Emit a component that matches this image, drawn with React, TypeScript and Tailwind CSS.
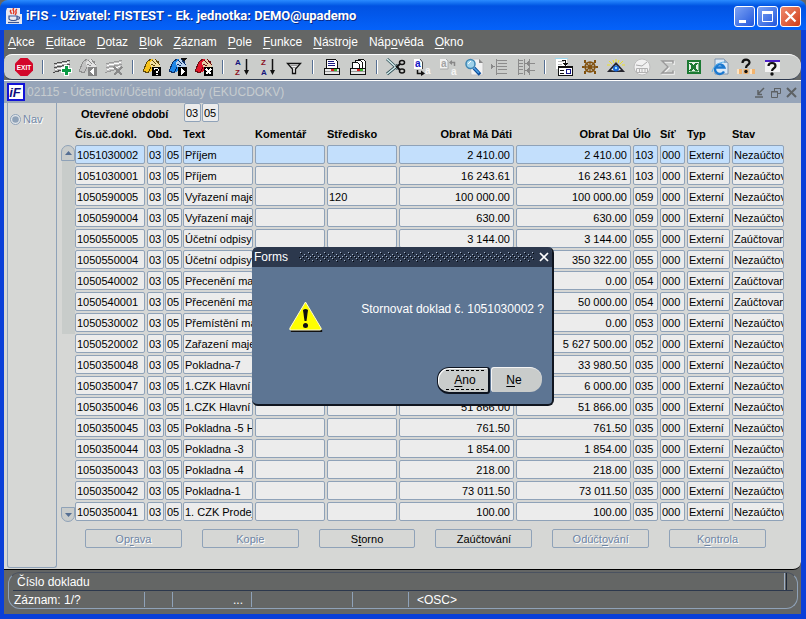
import React, { useState } from 'react';
import clsx from 'clsx';

interface DocumentRow {
  id: string;
  text: string;
  center?: string;
  debit: string;
  credit: string;
  task: string;
  status: string;
}

const OPEN = 'Nezaúčtovaný';
const POSTED = 'Zaúčtovaný';

const ROWS: DocumentRow[] = [
  { id: '1051030002', text: 'Příjem', debit: '2 410.00', credit: '2 410.00', task: '103', status: OPEN },
  { id: '1051030001', text: 'Příjem', debit: '16 243.61', credit: '16 243.61', task: '103', status: OPEN },
  { id: '1050590005', text: 'Vyřazení majetku', center: '120', debit: '100 000.00', credit: '100 000.00', task: '059', status: OPEN },
  { id: '1050590004', text: 'Vyřazení majetku', debit: '630.00', credit: '630.00', task: '059', status: OPEN },
  { id: '1050550005', text: 'Účetní odpisy', debit: '3 144.00', credit: '3 144.00', task: '055', status: POSTED },
  { id: '1050550004', text: 'Účetní odpisy', debit: '350 322.00', credit: '350 322.00', task: '055', status: OPEN },
  { id: '1050540002', text: 'Přecenění majetku', debit: '0.00', credit: '0.00', task: '054', status: POSTED },
  { id: '1050540001', text: 'Přecenění majetku', debit: '50 000.00', credit: '50 000.00', task: '054', status: POSTED },
  { id: '1050530002', text: 'Přemístění majetku', debit: '0.00', credit: '0.00', task: '053', status: OPEN },
  { id: '1050520002', text: 'Zařazení majetku', debit: '5 627 500.00', credit: '5 627 500.00', task: '052', status: OPEN },
  { id: '1050350048', text: 'Pokladna-7', debit: '33 980.50', credit: '33 980.50', task: '035', status: OPEN },
  { id: '1050350047', text: '1.CZK Hlavní', debit: '6 000.00', credit: '6 000.00', task: '035', status: OPEN },
  { id: '1050350046', text: '1.CZK Hlavní', debit: '51 866.00', credit: '51 866.00', task: '035', status: OPEN },
  { id: '1050350045', text: 'Pokladna -5 H', debit: '761.50', credit: '761.50', task: '035', status: OPEN },
  { id: '1050350044', text: 'Pokladna -3', debit: '1 854.00', credit: '1 854.00', task: '035', status: OPEN },
  { id: '1050350043', text: 'Pokladna -4', debit: '218.00', credit: '218.00', task: '035', status: OPEN },
  { id: '1050350042', text: 'Pokladna-1', debit: '73 011.50', credit: '73 011.50', task: '035', status: OPEN },
  { id: '1050350041', text: '1. CZK Prodej', debit: '100.00', credit: '100.00', task: '035', status: OPEN },
];

// "_" marks the mnemonic letter that follows it
const MENU = ['_Akce', '_Editace', '_Dotaz', '_Blok', '_Záznam', '_Pole', '_Funkce', '_Nástroje', 'Náp_ověda', '_Okno'];

const ACTIONS = [
  { label: 'Op_rava', disabled: true },
  { label: 'Kopie', disabled: true },
  { label: 'S_torno', disabled: false },
  { label: 'Zaúčtování', disabled: false },
  { label: 'Odúčt_ování', disabled: true },
  { label: 'K_ontrola', disabled: true },
];

const Mnemonic = ({ label }: { label: string }) => {
  const at = label.indexOf('_');
  if (at < 0) return <>{label}</>;
  return (
    <>
      {label.slice(0, at)}
      <span className="underline underline-offset-2">{label[at + 1]}</span>
      {label.slice(at + 2)}
    </>
  );
};

const Icon = ({ children, smooth }: { children: React.ReactNode; smooth?: boolean }) => (
  <svg viewBox="0 0 20 20" className="h-5 w-5" shapeRendering={smooth ? 'auto' : 'crispEdges'} fill="none" aria-hidden="true">
    {children}
  </svg>
);

const Strip = ({ ink, light }: { ink: string; light: string }) => (
  <>
    <path d="M2 6L18 3V11L2 15Z" fill={light} />
    <path d="M2 6.500L18 3.500M2 10.500L18 7.500M1 15.500L14 12" stroke={ink} />
    <path d="M3 8.500L17 5.500M3 12.500L16 9.500" stroke="#fff" />
  </>
);

const Folder = ({ color, dark, paper, children }: { color: string; dark: string; paper: string; children: React.ReactNode }) => (
  <>
    <path d="M1 14L5 5L10 2L14 6L10 14L6 16Z" fill={color} />
    <path d="M1 14L5 5L9 2M1 14L6 16L9 10" stroke={dark} />
    <path d="M8 5L13 2L18 7V10H9Z" fill={paper} />
    <path d="M10 3L14 7M13 2L18 8M9 7L13 9M14 4L17 5" stroke={dark} />
    {children}
  </>
);

const Printer = ({ stack }: { stack?: boolean }) => (
  <>
    {stack && <path d="M10.500 4V2.500H15.500L17.500 4.500V11H10.500Z" fill="#fff" stroke="#111" />}
    {stack && <path d="M7.500 5V3.500H12.500L14.500 5.500V11H7.500Z" fill="#fff" stroke="#111" />}
    {stack && <path d="M4.500 11V5.500H9.500L11.500 7.500V11Z" fill="#fff" stroke="#111" />}
    {!stack && <path d="M4.500 11.500V2.500H13.500L15.500 4.500V11.500Z" fill="#fff" stroke="#111" />}
    {!stack && <path d="M6 4.500H12M6 6.500H13M6 8.500H13" stroke="#1a1a80" />}
    <path d="M2.500 11.500H17.500V17.500H2.500Z" fill="#e8e8e8" stroke="#111" />
    <path d="M3 14.500H17" stroke="#999" />
    <path d="M9 12H12V14H9Z" fill="#d81e1e" />
    <path d="M12 12H15V14H12Z" fill="#3cb52c" />
  </>
);

const iconFont = "font-['Liberation_Sans',Arial,sans-serif] font-bold";

const TOOLBAR: ({ name: string; icon: React.ReactNode; disabled?: boolean } | null)[] = [
  {
    name: 'Konec',
    icon: (
      <Icon smooth>
        <path d="M6.500 1H13.500L19 6.500V13.500L13.500 19H6.500L1 13.500V6.500Z" fill="#d3072a" />
        <text x="10" y="12.500" textAnchor="middle" fontSize="6.500" fill="#fff" className={iconFont}>EXIT</text>
      </Icon>
    ),
  },
  null,
  {
    name: 'Vložit záznam',
    icon: <Icon><Strip ink="#4c4c4c" light="#b4b4b4" /><path d="M12 8H17V11H20V16H17V19H12V16H9V11H12Z" fill="#fff" /><path d="M13 9H16V12H19V15H16V18H13V15H10V12H13Z" fill="#0b9a44" /></Icon>,
  },
  {
    name: 'Kopírovat záznam',
    disabled: true,
    icon: <Icon><Folder color="#c2c2c2" dark="#8d8d8d" paper="#e2e2e2"><path d="M10 10H19V19H10Z" fill="#858585" /><path d="M16 11V18L12 14.500Z" fill="#fff" /></Folder></Icon>,
  },
  {
    name: 'Smazat záznam',
    disabled: true,
    icon: <Icon><Strip ink="#9a9a9a" light="#c4c4c4" /><path d="M10 10L18 18M18 10L10 18" stroke="#8a8a8a" strokeWidth="2" /></Icon>,
  },
  null,
  {
    name: 'Zadat dotaz',
    icon: (
      <Icon>
        <Folder color="#f6c21c" dark="#5e4708" paper="#f3e0a0">
          <path d="M10 10H19V19H10Z" fill="#000" />
          <path d="M12 11H16V12H12ZM16 12H17V14H16ZM12 12H13V13H12ZM14 14H16V16H14ZM14 17H16V18H14Z" fill="#fff" />
        </Folder>
      </Icon>
    ),
  },
  {
    name: 'Provést dotaz',
    icon: <Icon><Folder color="#1d86e8" dark="#0c2f66" paper="#b9d2ee"><path d="M12 1H19L16 5Z" fill="#111" /><path d="M10 10H19V19H10Z" fill="#000" /><path d="M13 11V18L17 14.500Z" fill="#fff" /></Folder></Icon>,
  },
  {
    name: 'Zrušit dotaz',
    icon: <Icon><Folder color="#e0152a" dark="#6b0b10" paper="#e8cfa8"><path d="M10 10H19V19H10Z" fill="#000" /><path d="M12 12L17 17M17 12L12 17" stroke="#fff" strokeWidth="1.500" /></Folder></Icon>,
  },
  null,
  {
    name: 'Seřadit vzestupně',
    icon: (
      <Icon smooth>
        <text x="3" y="8" fontSize="8" fill="#15157c" className={iconFont}>A</text>
        <text x="3" y="18" fontSize="8" fill="#8a1024" className={iconFont}>Z</text>
        <path d="M14.500 2V16" stroke="#111" strokeWidth="1.500" />
        <path d="M12 13H17L14.500 18Z" fill="#111" />
      </Icon>
    ),
  },
  {
    name: 'Seřadit sestupně',
    icon: (
      <Icon smooth>
        <text x="3" y="8" fontSize="8" fill="#8a1024" className={iconFont}>Z</text>
        <text x="3" y="18" fontSize="8" fill="#15157c" className={iconFont}>A</text>
        <path d="M14.500 2V16" stroke="#111" strokeWidth="1.500" />
        <path d="M12 13H17L14.500 18Z" fill="#111" />
      </Icon>
    ),
  },
  {
    name: 'Filtr',
    icon: <Icon smooth><path d="M3.500 6.500H16.500L11.500 12V16.500H8.500V12Z" fill="#f0f0f0" stroke="#111" strokeWidth="1.300" /><path d="M6 8.500H14M8 10.500H12" stroke="#999" /></Icon>,
  },
  null,
  { name: 'Tisk', icon: <Icon><Printer /></Icon> },
  { name: 'Tisk více', icon: <Icon><Printer stack /></Icon> },
  null,
  {
    name: 'Vyjmout',
    icon: (
      <Icon smooth>
        <path d="M1 2L12 12M1 17L12 8" stroke="#2b4a50" strokeWidth="3" />
        <path d="M1 2L12 12M1 17L12 8" stroke="#d5eef0" strokeWidth="1.500" />
        <path d="M10 10.500L14 7M10 9L14 13" stroke="#111" strokeWidth="2" />
        <ellipse cx="16" cy="5.500" rx="2.500" ry="2" stroke="#111" strokeWidth="1.500" />
        <ellipse cx="16" cy="14" rx="2.500" ry="2" stroke="#111" strokeWidth="1.500" />
      </Icon>
    ),
  },
  {
    name: 'Kopírovat',
    icon: (
      <Icon smooth>
        <path d="M2 2H8L11 5V12H2Z" fill="#fff" />
        <path d="M8 2L10.500 5V12" stroke="#444" />
        <text x="3" y="10" fontSize="10" fill="#1212c4" className={iconFont}>a</text>
        <path d="M5.500 13V16.500H10" stroke="#111" strokeWidth="1.500" />
        <path d="M9 13.500V19L13 16.500Z" fill="#111" />
        <text x="13" y="17" fontSize="10" fill="#f5f5f5" className={iconFont}>a</text>
      </Icon>
    ),
  },
  {
    name: 'Vložit',
    disabled: true,
    icon: (
      <Icon smooth>
        <path d="M2 2H8L10 4V12H2Z" fill="#f2f2f2" />
        <path d="M8 2L10 4V12H2" stroke="#aaa" />
        <text x="3" y="10" fontSize="10" fill="#a4a4a4" className={iconFont}>a</text>
        <path d="M16.500 9V5.500H12" stroke="#888" strokeWidth="1.500" />
        <path d="M14 3V8L11 5.500Z" fill="#888" />
        <text x="13" y="18" fontSize="10" fill="#f5f5f5" className={iconFont}>a</text>
      </Icon>
    ),
  },
  {
    name: 'Najít',
    icon: (
      <Icon smooth>
        <path d="M6 2H15L19 6V18H7Z" fill="#f2f2f2" stroke="#c2c2c2" />
        <path d="M15 2V6H19Z" fill="#888" />
        <circle cx="6.500" cy="7" r="4.500" fill="#9fd2ea" stroke="#3d86b4" strokeWidth="1.500" />
        <path d="M4 7L7 4" stroke="#fff" />
        <path d="M10 11L16 17.500" stroke="#0b4d9c" strokeWidth="3.500" />
        <path d="M10 11L15 16" stroke="#4fa3e6" strokeWidth="1.500" />
      </Icon>
    ),
  },
  {
    name: 'Seznam hodnot',
    disabled: true,
    icon: <Icon><path d="M1 7L5 9.500L1 12Z" fill="#888" /><path d="M6.500 2V18M6 3.500H17M8 6.500H17M6 9.500H17M8 12.500H17M6 16.500H17" stroke="#8c8c8c" /></Icon>,
  },
  {
    name: 'Více hodnot',
    disabled: true,
    icon: <Icon><path d="M2.500 2V18M2 3.500H7M2 6.500H7M2 9.500H7M2 12.500H7M2 16.500H7M8.500 2V18M9 6.500H19M9 13.500H19M13.500 2V18" stroke="#8c8c8c" /><path d="M9 6.500L13 4V9ZM9 13.500L13 11V16Z" fill="#888" /></Icon>,
  },
  null,
  {
    name: 'Detail',
    icon: (
      <Icon>
        <path d="M2 2H13V12H2Z" fill="#fff" />
        <path d="M1 1.500H14" stroke="#9ad8f0" />
        <path d="M4 4.500H10M4 7.500H8" stroke="#bbb" />
        <path d="M8 3.500H11.500V7" stroke="#111" />
        <path d="M9 6H14L11.500 9Z" fill="#111" />
        <path d="M4.500 9.500H18.500V18.500H4.500Z" fill="#fff" stroke="#111" />
        <path d="M4 10H19M6 13.500H10M6 16.500H10" stroke="#111" strokeWidth="1.500" />
        <path d="M12.500 12.500H16.500V16.500H12.500Z" stroke="#15158a" />
      </Icon>
    ),
  },
  {
    name: 'Navigace',
    icon: (
      <Icon smooth>
        <circle cx="10" cy="10" r="4.800" stroke="#82520f" strokeWidth="1.800" />
        <circle cx="10" cy="10" r="1.800" fill="#82520f" />
        <path d="M10 5V15M2 10H18M5 5L15 15M15 5L5 15" stroke="#82520f" strokeWidth="1.300" />
        <path d="M2 9H4V11H2ZM16 9H18V11H16ZM4 3H6V6H4ZM14 3H16V6H14ZM4 14H6V17H4ZM14 14H16V17H14Z" fill="#82520f" />
      </Icon>
    ),
  },
  {
    name: 'Zobrazit',
    icon: (
      <Icon smooth>
        <path d="M3 4L6 7M7 3L8 6M10 2V5M13 3L12 6M17 4L14 7M1 8H4M16 8H19" stroke="#eadf2a" />
        <path d="M1 15L10 5L19 15Z" fill="#26262e" />
        <path d="M5 13L10 8L15 13L10 14Z" fill="#e8f4fb" />
        <circle cx="10" cy="11.500" r="3" fill="#1766d8" />
        <circle cx="10" cy="11" r="1.200" fill="#9be1ff" />
      </Icon>
    ),
  },
  {
    name: 'Hodiny',
    disabled: true,
    icon: (
      <Icon smooth>
        <circle cx="10" cy="10" r="8" fill="#f1f1f1" stroke="#bdbdbd" />
        <path d="M10 9L15 5M10 9L4 8" stroke="#aaa" />
        <path d="M4.500 11.500H15.500V15.500H4.500ZM7.500 12V15M10 12V15M13 12V15" stroke="#b2b2b2" />
      </Icon>
    ),
  },
  {
    name: 'Součet',
    disabled: true,
    icon: <Icon smooth><path d="M16 8V5H5L11 11L5 17H16V14" stroke="#f2f2f2" strokeWidth="1.500" /><path d="M15 6.500V4H4L10 10L4 16H15V13.500" stroke="#999" strokeWidth="1.500" /></Icon>,
  },
  {
    name: 'Excel',
    icon: (
      <Icon>
        <path d="M4 4H16V16H4Z" fill="#e9f3ea" stroke="#1c7a33" strokeWidth="2" />
        <path d="M6 6L13 14M13 6L6 14" stroke="#1c7a33" strokeWidth="2.500" />
        <path d="M14 6V14M6 14.500H14" stroke="#79b486" />
      </Icon>
    ),
  },
  {
    name: 'Prohlížeč',
    icon: (
      <Icon smooth>
        <path d="M5 2H14L18 6V17H5Z" fill="#dbe9f7" stroke="#7d93ad" />
        <path d="M14 2V6H18Z" fill="#8fa9c4" />
        <path d="M14 14.500A4.800 4.800 0 1 1 14.300 10.500H6" stroke="#1b78cf" strokeWidth="2.400" />
        <path d="M2 15C3 9 9 5 15 5" stroke="#58b0ea" />
      </Icon>
    ),
  },
  {
    name: 'Nápověda k bloku',
    icon: (
      <Icon smooth>
        <path d="M1 12H6V17H1ZM7.500 12H12.500V17H7.500ZM14 12H19V17H14Z" fill="#f2b46e" />
        <path d="M1 12H3V17H1ZM14 12H16V17H14Z" fill="#fbe3c4" />
        <path d="M6.500 6C6.500 1.500 13.500 1.500 13.500 5.500C13.500 8 10 8 10 11" stroke="#111" strokeWidth="2.200" />
        <circle cx="10" cy="14.500" r="1.700" fill="#111" />
      </Icon>
    ),
  },
  {
    name: 'Nápověda',
    icon: (
      <Icon smooth>
        <path d="M3 3H18V15H3Z" fill="#f3f3f3" />
        <path d="M3 3H18V5H3Z" fill="#4a1fc4" />
        <path d="M6.500 9C6.500 5 13.500 5 13.500 9C13.500 11.500 10 11 10 14" stroke="#111" strokeWidth="2.200" />
        <circle cx="10" cy="17" r="1.700" fill="#111" />
      </Icon>
    ),
  },
];

const TitleBar = () => (
  <header className="flex h-[30px] items-center rounded-t-lg bg-linear-to-b from-[#2a8bff] from-0% via-[#0152e2] via-20% to-[#0562fa] pt-0.5 pr-[5px] pl-1.5">
    <svg viewBox="0 0 16 16" className="h-4 w-4" aria-hidden="true">
      <path d="M1 0H14V6H16V16H0V3Z" fill="#e7e9f2" />
      <path d="M8 0C5 2 10 3 7 6M11 1C8 3 12 4 9 7M5 2C3 4 6 4 5 6" stroke="#e0321c" strokeWidth="1.400" fill="none" />
      <path d="M3 8H11V11C11 13 4 13 3 11ZM11 9C15 8 14 12 11 11" fill="none" stroke="#3c5693" strokeWidth="1.200" />
      <path d="M2 14.500H13" stroke="#3c5693" strokeWidth="1.200" />
    </svg>
    <h1 className="ml-1 flex-1 font-[Roboto,sans-serif] text-[13px] leading-4 font-bold text-white [text-shadow:1px_1px_0_#0a2a86]">
      iFIS - Uživatel: FISTEST - Ek. jednotka: DEMO@upademo
    </h1>
    <div className="flex gap-0.5">
      <button aria-label="Minimalizovat" className="flex h-[21px] w-[21px] items-center justify-center rounded-[3px] border border-white bg-linear-to-br from-[#7da2f3] to-[#2255dc]">
        <svg viewBox="0 0 19 19" className="h-[19px] w-[19px]"><path d="M4 13H11V16H4Z" fill="#fff" /></svg>
      </button>
      <button aria-label="Maximalizovat" className="flex h-[21px] w-[21px] items-center justify-center rounded-[3px] border border-white bg-linear-to-br from-[#7da2f3] to-[#2255dc]">
        <svg viewBox="0 0 19 19" className="h-[19px] w-[19px]"><path d="M4.500 5V14.500H14.500V5" stroke="#fff" fill="none" /><path d="M4 4H15V7H4Z" fill="#fff" /></svg>
      </button>
      <button aria-label="Zavřít" className="flex h-[21px] w-[21px] items-center justify-center rounded-[3px] border border-white bg-linear-to-br from-[#ee8a6c] to-[#d03a12]">
        <svg viewBox="0 0 19 19" className="h-[19px] w-[19px]"><path d="M4.500 4.500L14.500 14.500M14.500 4.500L4.500 14.500" stroke="#fff" strokeWidth="2.200" /></svg>
      </button>
    </div>
  </header>
);

interface FieldProps {
  label: string;
  value: string;
  selected?: boolean;
  right?: boolean;
}

const Field = ({ label, value, selected, right }: FieldProps) => (
  <input
    readOnly
    aria-label={label}
    value={value}
    className={clsx(
      'block h-[19px] w-full rounded-[2px] border border-[#8fa2b8] text-[11px] leading-4 text-black outline-none',
      selected ? 'bg-[#c3dffc]' : 'bg-[#ececec]',
      right ? 'pr-[3px] text-right' : 'pl-px',
    )}
  />
);

const DocumentTable = () => (
  <table className="w-full table-fixed border-collapse">
    <colgroup>
      <col className="w-[72px]" />
      <col className="w-[18px]" />
      <col className="w-[18px]" />
      <col className="w-[72px]" />
      <col className="w-[72px]" />
      <col className="w-[72px]" />
      <col className="w-[117px]" />
      <col className="w-[117px]" />
      <col className="w-[27px]" />
      <col className="w-[27px]" />
      <col className="w-[45px]" />
      <col className="w-[54px]" />
    </colgroup>
    <thead>
      <tr className="h-[22px] text-left text-[11px] leading-4 whitespace-nowrap text-black [&>th]:p-0">
        <th>Čís.úč.dokl.</th>
        <th colSpan={2}>Obd.</th>
        <th>Text</th>
        <th>Komentář</th>
        <th>Středisko</th>
        <th><div className="pr-1 text-right">Obrat Má Dáti</div></th>
        <th><div className="pr-1 text-right">Obrat Dal</div></th>
        <th>Úlo</th>
        <th>Síť</th>
        <th>Typ</th>
        <th>Stav</th>
      </tr>
    </thead>
    <tbody>
      {ROWS.map((row, i) => {
        const selected = i === 0;
        return (
          <tr key={row.id} className="[&>td]:h-[21px] [&>td]:p-0 [&>td]:pr-0.5 [&>td]:pb-0.5 [&>td:nth-child(2)]:pr-px [&>td:nth-child(3)]:pr-px">
            <td><Field label="Čís.úč.dokl." value={row.id} selected={selected} /></td>
            <td><Field label="Měsíc" value="03" selected={selected} /></td>
            <td><Field label="Rok" value="05" selected={selected} /></td>
            <td><Field label="Text" value={row.text} selected={selected} /></td>
            <td><Field label="Komentář" value="" selected={selected} /></td>
            <td><Field label="Středisko" value={row.center ?? ''} selected={selected} /></td>
            <td><Field label="Obrat Má Dáti" value={row.debit} selected={selected} right /></td>
            <td><Field label="Obrat Dal" value={row.credit} selected={selected} right /></td>
            <td><Field label="Úlo" value={row.task} selected={selected} /></td>
            <td><Field label="Síť" value="000" selected={selected} /></td>
            <td><Field label="Typ" value="Externí" selected={selected} /></td>
            <td><Field label="Stav" value={row.status} selected={selected} /></td>
          </tr>
        );
      })}
    </tbody>
  </table>
);

const Scroller = () => (
  <div className="mt-[22px] mb-px flex w-[14px] flex-col">
    <button aria-label="Nahoru" className="flex h-4 items-center justify-center rounded-t-full border border-[#8fa2b8] bg-[#c9cccb]">
      <svg viewBox="0 0 7 4" className="h-1 w-[7px]"><path d="M0 4L3.500 0L7 4Z" fill="#566f93" /></svg>
    </button>
    <div className="flex-1">
      <div className="ml-px h-1/2 bg-[#c8ccca]" />
    </div>
    <button aria-label="Dolů" className="flex h-[15px] items-center justify-center rounded-b-full border border-[#8fa2b8] bg-[#c9cccb]">
      <svg viewBox="0 0 7 4" className="h-1 w-[7px]"><path d="M0 0L3.500 4L7 0Z" fill="#566f93" /></svg>
    </button>
  </div>
);

const ConfirmDialog = ({ onClose }: { onClose: () => void }) => (
  <div
    role="dialog"
    aria-labelledby="dialog-title"
    className="absolute top-[247px] left-1/2 w-[302px] -translate-x-1/2 overflow-hidden rounded-md border-r-2 border-b-2 border-[#10151f] bg-[#5d7593] text-[12px] text-white"
  >
    <div className="flex h-5 items-center bg-[#2c384d] px-0.5">
      <h2 id="dialog-title" className="w-[45px]">Forms</h2>
      <svg className="h-3 flex-1" shapeRendering="crispEdges" aria-hidden="true">
        <defs>
          <pattern id="grip" width="8" height="12" patternUnits="userSpaceOnUse">
            <path d="M1 1H2V2H1ZM5 3H6V4H5ZM3 5H4V6H3ZM7 5H8V6H7ZM1 7H2V8H1ZM5 9H6V10H5Z" fill="#a9b8cc" />
            <path d="M2 2H3V3H2ZM6 4H7V5H6ZM4 6H5V7H4ZM0 6H1V7H0ZM2 8H3V9H2ZM6 10H7V11H6Z" fill="#04070c" />
          </pattern>
        </defs>
        <rect width="100%" height="100%" fill="url(#grip)" />
      </svg>
      <button aria-label="Zavřít dialog" onClick={onClose} className="ml-1 flex w-3 justify-center">
        <svg viewBox="0 0 10 10" className="h-2.5 w-2.5"><path d="M1 1L9 9M9 1L1 9" stroke="#fff" strokeWidth="1.700" /></svg>
      </button>
    </div>
    <div className="flex items-start pt-[34px] pr-2 pl-9">
      <svg viewBox="0 0 35 31" className="h-[31px] w-[35px]" aria-hidden="true">
        <path d="M17.500 2L33 28Q34 30 32 30H3Q1 30 2 28Z" fill="#111" transform="translate(1 1)" />
        <path d="M17.500 1L33 27Q34 29 32 29H3Q1 29 2 27Z" fill="#ff0" stroke="#fffbd0" />
        <path d="M15 9Q17.500 7 20 9L18.500 20H16.500Z" fill="#111" />
        <circle cx="17.500" cy="24.500" r="2.500" fill="#111" />
      </svg>
      <p className="flex-1 text-right leading-4">Stornovat doklad č. 1051030002 ?</p>
    </div>
    <div className="flex justify-end gap-px pt-[35px] pr-2.5 pb-2.5 text-black">
      <button
        onClick={onClose}
        className="flex h-[27px] w-[53px] rounded-l-xl rounded-r-[3px] border border-r-2 border-b-2 border-[#0d1420] bg-[#c9cccb] py-0.5 pr-1 pl-2 shadow-[inset_1px_1px_0_#fff]"
      >
        <span className="flex h-full w-full items-center justify-center border-y border-dashed border-black"><Mnemonic label="_Ano" /></span>
      </button>
      <button onClick={onClose} className="h-[25px] w-[51px] rounded-l-[3px] rounded-r-xl border-t border-l border-[#f4f4f4] bg-[#c9cccb] pr-1.5">
        <Mnemonic label="_Ne" />
      </button>
    </div>
  </div>
);

const StatusBar = () => (
  <footer className="bg-[#646665] pt-0.5 pr-[3px] pb-[5px] pl-1 text-[12px] leading-4 text-white">
    <div className="rounded-xl border border-[#8fa2b8] border-t-[#4a5260]">
      <div className="mr-1 ml-1 flex h-[18px] items-center border-b border-[#2c384d] pl-1">
        <span className="flex-1">Číslo dokladu</span>
        <span className="mr-1.5 h-full w-[3px] border-r border-l border-r-[#1e2838] border-l-[#9fb0c6]" />
      </div>
      <div className="flex h-[17px] items-center pl-[5px] [&>span]:h-[15px] [&>span]:border-[#8fa2b8]">
        <span className="w-[131px] border-r">Záznam: 1/?</span>
        <span className="w-7 border-r" />
        <span className="w-[79px] border-r pr-2 text-right">...</span>
        <span className="w-[101px] border-r" />
        <span className="w-14 border-r" />
        <span className="pl-2">&lt;OSC&gt;</span>
      </div>
    </div>
  </footer>
);

export default function App() {
  const [dialogOpen, setDialogOpen] = useState(true);

  return (
    <div className="relative flex min-h-screen flex-col bg-[#646665] font-['Liberation_Sans',Arial,sans-serif]">
      <TitleBar />
      <div className="flex flex-1 flex-col border-r-[5px] border-b-[5px] border-l-4 border-[#0a3fd8]">
        <nav className="flex h-6 items-center gap-[11px] pl-1 text-[12px] leading-4 text-white">
          {MENU.map((label) => (
            <button key={label}><Mnemonic label={label} /></button>
          ))}
        </nav>
        <div role="toolbar" className="flex h-[26px] items-center rounded-l-lg rounded-r-xl border-t border-b border-t-white border-b-[#2c384d] bg-[#cbcdcb] pl-[7px]">
          {TOOLBAR.map((tool, i) =>
            tool ? (
              <button key={tool.name} aria-label={tool.name} disabled={tool.disabled} className="flex w-[26px] shrink-0 justify-center">
                {tool.icon}
              </button>
            ) : (
              <span key={i} className="flex w-3 shrink-0 justify-center">
                <span className="h-[14px] w-0.5 border-l border-[#566f93] bg-white" />
              </span>
            ),
          )}
        </div>

        <main className="flex flex-1 flex-col rounded-br-lg border-b border-black bg-[#d6d7d5]">
          <div className="flex h-[23px] items-center border-t border-white bg-[#97a5b9] pr-1 pl-[3px]">
            <svg viewBox="0 0 18 18" className="h-[18px] w-[18px]" aria-hidden="true">
              <path d="M1 1H17V17H1Z" fill="#fff" stroke="#1212d8" strokeWidth="2" />
              <text x="8" y="14" textAnchor="middle" fontSize="13" fill="#101080" className="font-['Liberation_Sans',Arial,sans-serif] font-bold italic">iF</text>
            </svg>
            <h2 className="ml-0.5 flex-1 text-[12px] leading-4 text-[#c6cccf]">02115 - Účetnictví/Účetní doklady (EKUCDOKV)</h2>
            <div className="flex gap-[5px]">
              <button aria-label="Minimalizovat formulář">
                <svg viewBox="0 0 11 11" className="h-[11px] w-[11px]" fill="none" stroke="#5d6164" strokeWidth="1.500"><path d="M10 1L4 7M4 3V7.500H8M1 10H9" /></svg>
              </button>
              <button aria-label="Obnovit formulář">
                <svg viewBox="0 0 11 11" className="h-[11px] w-[11px]" fill="none" stroke="#5d6164"><path d="M4 1.500H10.500V6.500H8M4.500 1V4M4 1.500H10.500M1.500 4.500H7.500V10.500H1.500ZM1 5H8" /></svg>
              </button>
              <button aria-label="Zavřít formulář">
                <svg viewBox="0 0 11 11" className="h-[11px] w-[11px]" fill="none" stroke="#5d6164" strokeWidth="2"><path d="M1 1L10 10M10 1L1 10" /></svg>
              </button>
            </div>
          </div>

          <div className="flex flex-1">
            <aside className="mb-px ml-[3px] w-[50px] rounded-b-[3px] border border-t-0 border-[#8fa2b8] pt-2">
              <button className="flex items-center gap-0.5 pl-0.5 text-[11px] leading-4 text-[#7389a8] [text-shadow:1px_1px_0_#fff]">
                <svg viewBox="0 0 11 11" className="h-[11px] w-[11px]" aria-hidden="true">
                  <circle cx="5.500" cy="5.500" r="5" fill="#e4e7ea" stroke="#8fa2b8" />
                  <circle cx="5.500" cy="5.500" r="3.300" fill="#8fa2b8" />
                </svg>
                Nav
              </button>
            </aside>

            <section className="min-w-0 flex-1 pr-[15px] pl-1">
              <div className="flex h-5 items-start pl-5">
                <label htmlFor="open-month" className="w-[103px] pt-0.5 text-[11px] leading-[18px] font-bold whitespace-nowrap text-black">Otevřené období</label>
                <div className="flex w-[34px] gap-px">
                  <input id="open-month" readOnly value="03" className="h-[19px] w-[17px] shrink-0 rounded-[2px] border border-[#8fa2b8] bg-[#ececec] pl-px text-[11px] outline-none" />
                  <input aria-label="Rok období" readOnly value="05" className="h-[19px] w-[17px] shrink-0 rounded-[2px] border border-[#8fa2b8] bg-[#ececec] pl-px text-[11px] outline-none" />
                </div>
              </div>
              <div className="flex">
                <Scroller />
                <div className="min-w-0 flex-1">
                  <DocumentTable />
                </div>
              </div>
              <div className="flex gap-5 pt-1.5 pr-5 pl-6">
                {ACTIONS.map((action) => (
                  <button
                    key={action.label}
                    disabled={action.disabled}
                    onClick={() => setDialogOpen(true)}
                    className={clsx(
                      'h-[19px] flex-1 rounded-[2px] border border-[#8fa2b8] text-[11px] leading-4',
                      action.disabled ? 'text-[#6d84a4] [text-shadow:1px_1px_0_#fff]' : 'text-black',
                    )}
                  >
                    <Mnemonic label={action.label} />
                  </button>
                ))}
              </div>
            </section>
          </div>
        </main>
        <StatusBar />
      </div>
      {dialogOpen && <ConfirmDialog onClose={() => setDialogOpen(false)} />}
    </div>
  );
}
